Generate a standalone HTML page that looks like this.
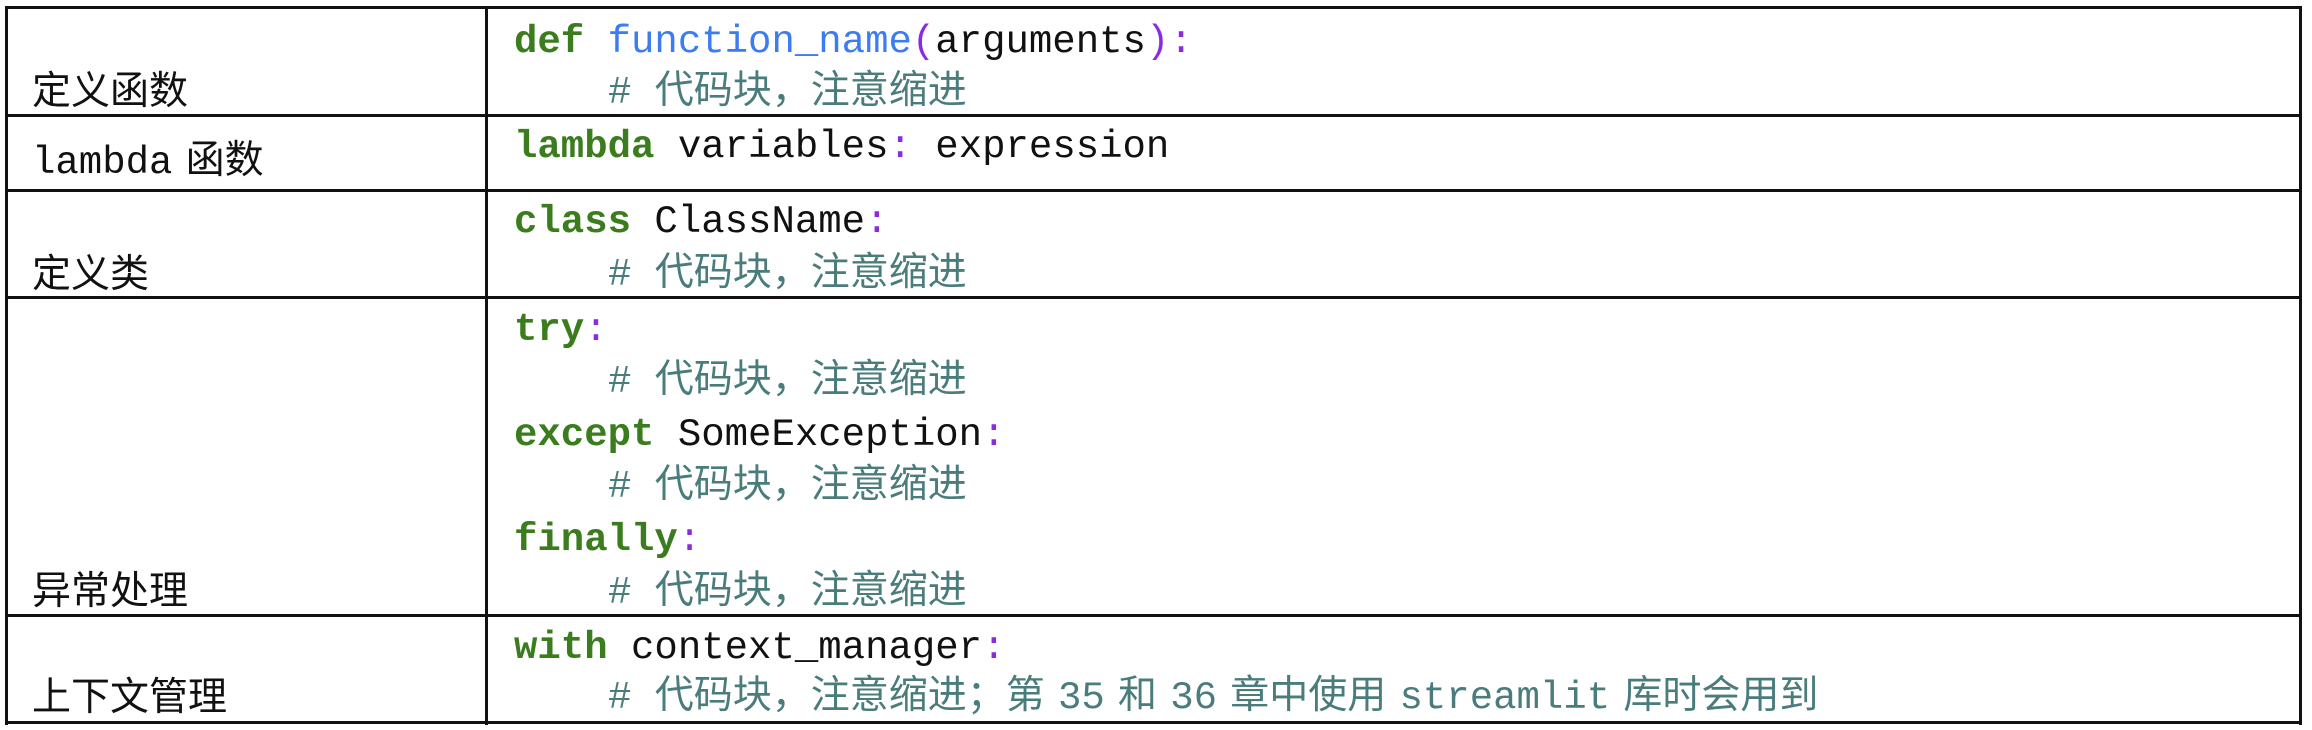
<!DOCTYPE html>
<html><head><meta charset="utf-8"><style>
body{margin:0;width:2312px;height:730px;background:#fff;position:relative;overflow:hidden}
.h{position:absolute;left:5px;width:2297px;height:3px;background:#111}
.v{position:absolute;top:7px;height:718px;width:3px;background:#111}
.t{position:absolute;white-space:pre;font-family:"Liberation Mono","Noto Sans CJK SC",monospace;font-size:39px;line-height:40px;height:40px;color:#111}
.l{font-family:"Liberation Sans","Noto Sans CJK SC",sans-serif;font-size:39px;left:32px}
.k{color:#3b7d1e;font-weight:bold}.f{color:#3b7cf0}.p{color:#8a2be2}.c{color:#4a7c7c}
.s{font-size:22px}
</style></head><body>
<div class="h" style="top:6px"></div>
<div class="h" style="top:114px"></div>
<div class="h" style="top:189px"></div>
<div class="h" style="top:296px"></div>
<div class="h" style="top:614px"></div>
<div class="h" style="top:721px"></div>
<div class="v" style="left:5px"></div>
<div class="v" style="left:485px"></div>
<div class="v" style="left:2299px"></div>

<div class="t l" style="top:72px">定义函数</div>
<div class="t l" style="top:143px;font-family:'Liberation Mono','Noto Sans CJK SC',monospace">lambda<span class="s"> </span>函数</div>
<div class="t l" style="top:255px">定义类</div>
<div class="t l" style="top:572px">异常处理</div>
<div class="t l" style="top:678px">上下文管理</div>

<div class="t" style="left:514px;top:22px"><span class="k">def</span> <span class="f">function_name</span><span class="p">(</span>arguments<span class="p">):</span></div>
<div class="t c" style="left:608px;top:73px"># 代码块，注意缩进</div>
<div class="t" style="left:514px;top:127px"><span class="k">lambda</span> variables<span class="p">:</span> expression</div>
<div class="t" style="left:514px;top:202px"><span class="k">class</span> ClassName<span class="p">:</span></div>
<div class="t c" style="left:608px;top:255px"># 代码块，注意缩进</div>
<div class="t" style="left:514px;top:310px"><span class="k">try</span><span class="p">:</span></div>
<div class="t c" style="left:608px;top:362px"># 代码块，注意缩进</div>
<div class="t" style="left:514px;top:415px"><span class="k">except</span> SomeException<span class="p">:</span></div>
<div class="t c" style="left:608px;top:467px"># 代码块，注意缩进</div>
<div class="t" style="left:514px;top:520px"><span class="k">finally</span><span class="p">:</span></div>
<div class="t c" style="left:608px;top:573px"># 代码块，注意缩进</div>
<div class="t" style="left:514px;top:628px"><span class="k">with</span> context_manager<span class="p">:</span></div>
<div class="t c" style="left:608px;top:678px"># 代码块，注意缩进；第<span class="s"> </span>35<span class="s"> </span>和<span class="s"> </span>36<span class="s"> </span>章中使用<span class="s"> </span>streamlit<span class="s"> </span>库时会用到</div>
</body></html>
